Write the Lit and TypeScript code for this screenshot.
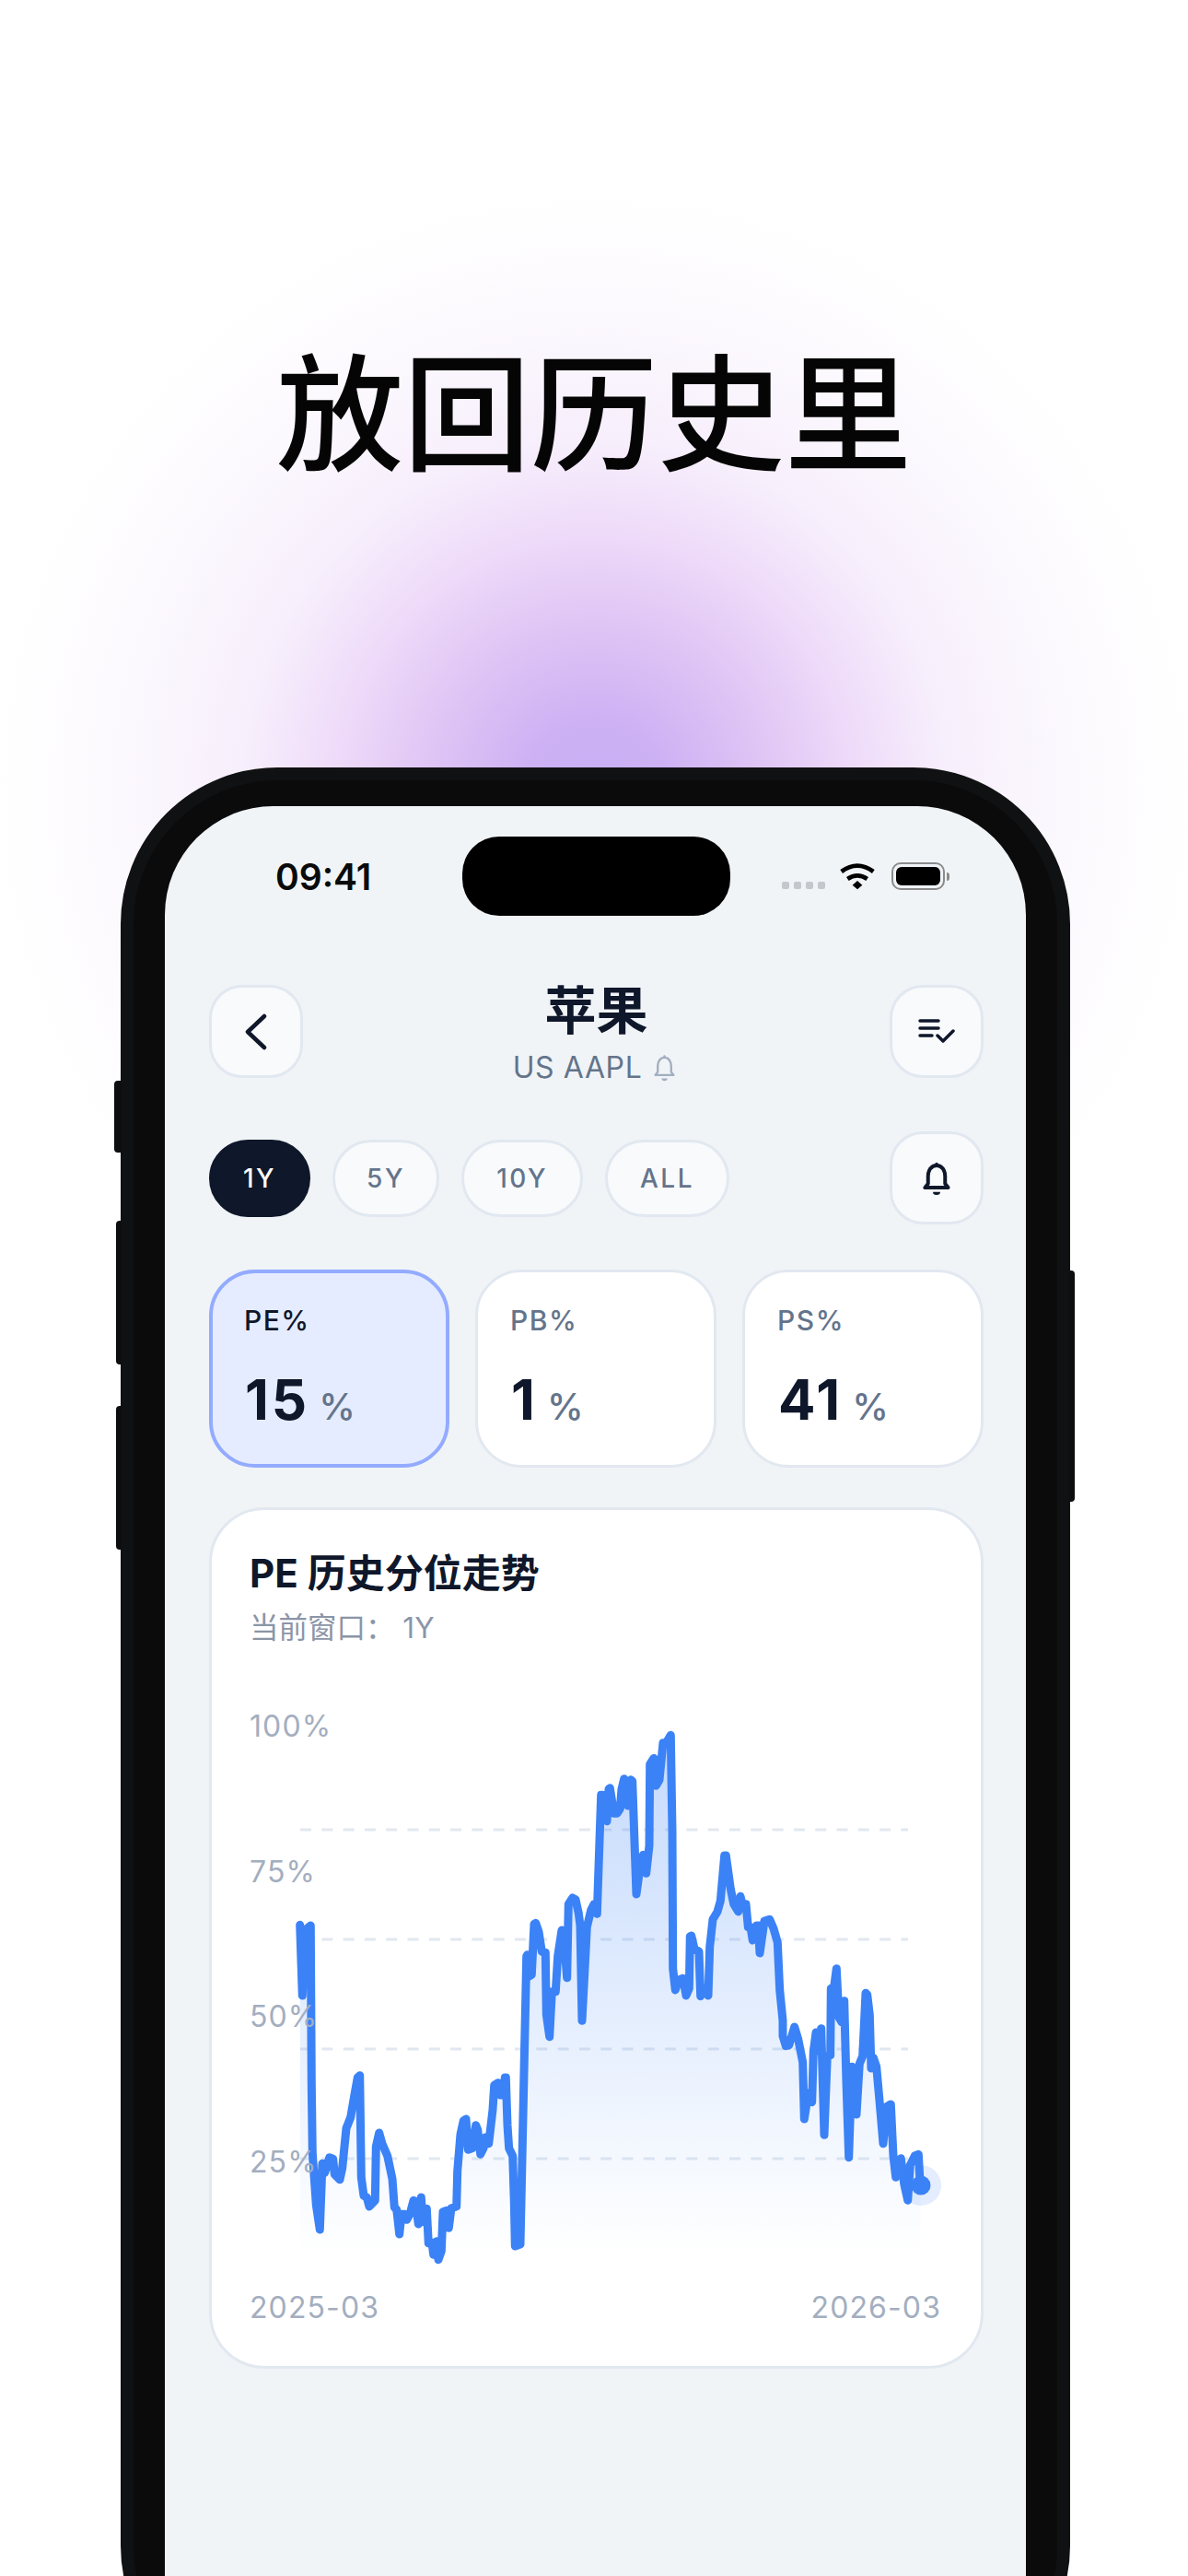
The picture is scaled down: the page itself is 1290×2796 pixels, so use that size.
import { LitElement, html, svg, css } from "lit";
import { customElement } from "lit/decorators.js";

type Seg = [number, number, number[]];
const segs: Seg[] = [
  [320, 2060, [17,88,25,318,33,130,40,100,52,90,55,600,58,830,70,1000,82,1080,90,865,98,895,113,845,125,850,130,900,147,917,155,880,168,750,182,715,195,640,205,585,212,578,217,910,225,970,235,975,243,1005,262,985,265,810,275,765,285,800,302,840,318,915,325,1008,332,1015,341,1095,348,1030,358,1030,365,1048,375,1030,387,985,393,988,403,1062,412,975,418,1055,430,1012,436,1125,447,1122,452,1162,462,1118,468,1178,478,1150,483,1022,495,1018,502,1075,510,1010,527,1005,530,890]],
  [490, 1870, [30,1340,40,1295,48,1290,55,1390,68,1385,80,1310,86,1325,95,1405,105,1385,110,1350,122,1370,135,1260,140,1180,152,1172,160,1212,168,1212,175,1155,178,1155,183,1310,188,1385,200,1410,205,1560,208,1704,225,1698,228,1560,245,760,248,755,255,825,262,820,270,655,275,652,285,680,295,745,307,748,310,950,320,1022,328,875,340,875,347,760,360,675,365,680,377,830,382,590,395,570,405,575,415,620,420,660,426,970,435,800,442,665,455,610,465,590,475,622,480,470,488,235,493,235,507,320,513,215,517,212,530,295,540,295,550,280,555,215,563,182,575,270,585,185,590,190]],
  [680, 1870, [33,558,45,470,55,430,65,490,75,400,77,135,90,115,97,205,108,185,120,65,130,65,145,40,150,350,152,800,160,870,170,838,185,832,195,888,205,865,208,695,212,693,222,735,237,745,242,890,252,865,267,888,272,730,282,640,297,615,307,580,320,432,325,432,340,540,350,590,365,615,372,565,378,590,390,590,397,665,405,665,412,708,425,660,430,660,435,750,450,645,467,640,480,670,493,715,500,870,510,970]],
  [840, 2100, [30,330,40,362,50,360,68,300,80,340,95,415,100,600,113,515,125,545,130,380,138,318,147,378,155,305,165,652,175,395,185,392,187,175,197,170,205,110,213,270,222,285,230,215,237,480,245,725,255,430,270,585,280,420,290,395,300,190,305,195,313,260,318,435,325,400,335,430,345,540,357,680,368,560,382,552,390,720,398,790,415,728,425,810,437,865,445,750,460,720,472,715,478,815]],
];

const pts: string[] = [];
for (const [ox, oy, p] of segs) {
  for (let i = 0; i < p.length; i += 2) {
    pts.push(`${(ox + p[i] / 3).toFixed(1)} ${(oy + p[i + 1] / 3).toFixed(1)}`);
  }
}
const linePath = "M" + pts.join("L");
const areaPath = linePath + "L1000 2445L326 2445Z";

const bell = (sw: number) => html`<svg class="bell-svg" viewBox="120 590 96 115" fill="none" stroke="currentColor" stroke-width=${sw} stroke-linejoin="round"><path d="M168 605C150 605 140 622 140 640V665L130 678H206L196 665V640C196 622 186 605 168 605Z"/><circle cx="168" cy="600" r="5" fill="currentColor" stroke="none"/><path d="M156 692H180A12 10 0 0 1 156 692Z" fill="currentColor" stroke="none"/></svg>`;

@customElement("app-root")
export class AppRoot extends LitElement {
  static styles = css`
    :host {
      display: block;
      width: 1290px;
      height: 2796px;
      overflow: hidden;
      font-family: Inter, "Noto Sans CJK SC", sans-serif;
      background: radial-gradient(circle 650px at 646px 860px, #c7aef5 0%, #cdb1f4 12%, #e0c6f5 29%, #eedaf9 43%, #f7effc 59%, #fcf9fe 80%, #ffffff 100%);
    }
    .headline {
      margin: 0;
      padding-top: 360px;
      height: 160px;
      line-height: 160px;
      text-align: center;
      font-family: "Noto Sans CJK SC", sans-serif;
      font-size: 138px;
      font-weight: 500;
      color: #050505;
    }
    .phone {
      position: relative;
      box-sizing: border-box;
      width: 1031px;
      height: 2100px;
      margin: 313px 0 0 131px;
      padding: 28px 34px 0;
      border: 14px solid #101112;
      border-radius: 170px;
      background: #0b0b0b;
    }
    .side { position: absolute; width: 8px; background: #0d0e0f; }
    .mute { left: -21px; top: 326px; height: 78px; border-radius: 4px 0 0 4px; }
    .vol-up { left: -19px; top: 478px; height: 156px; width: 6px; border-radius: 4px 0 0 4px; }
    .vol-down { left: -19px; top: 679px; height: 156px; width: 6px; border-radius: 4px 0 0 4px; }
    .power { right: -19px; top: 532px; height: 251px; width: 6px; border-radius: 0 4px 4px 0; }
    .screen {
      box-sizing: border-box;
      height: 2000px;
      padding: 33px 46px 0 48px;
      border-radius: 118px 118px 0 0;
      background: #f0f4f7;
    }
    .status {
      display: grid;
      grid-template-columns: 1fr 291px 1fr;
      align-items: center;
      height: 86px;
    }
    .time {
      padding-left: 72px;
      font-family: Inter, sans-serif;
      font-size: 39px;
      font-weight: 600;
      color: #0a0a0a;
    }
    .island { height: 86px; border-radius: 40px; background: #000; }
    .sys {
      display: flex;
      justify-content: flex-end;
      align-items: flex-end;
      padding-right: 37px;
    }
    .dots { display: flex; gap: 5px; margin-right: 15px; padding-bottom: 1px; }
    .dots i { display: block; width: 8px; height: 8px; border-radius: 2px; background: #c4c7cc; }
    .wifi { width: 40px; height: 30px; margin-right: 17px; }
    .batt { display: flex; align-items: center; gap: 2px; }
    .batt-body {
      box-sizing: border-box;
      width: 58px;
      height: 30px;
      padding: 3px;
      border: 2.5px solid #8b8b8b;
      border-radius: 10px;
    }
    .batt-fill { height: 100%; border-radius: 6px; background: #000; }
    .batt-nub { width: 3px; height: 9px; border-radius: 0 3px 3px 0; background: #8b8b8b; }
    .head {
      display: flex;
      justify-content: space-between;
      align-items: center;
      margin-top: 75px;
      height: 101px;
    }
    .icon-btn {
      box-sizing: border-box;
      display: flex;
      align-items: center;
      justify-content: center;
      width: 102px;
      height: 101px;
      border: 3px solid #e2e8f0;
      border-radius: 36px;
      background: #f8fafc;
      color: #0f172a;
    }
    .title-box {
      display: flex;
      flex-direction: column;
      align-items: center;
    }
    .title {
      font-family: "Noto Sans CJK SC", sans-serif;
      font-size: 56px;
      font-weight: 700;
      line-height: 62px;
      color: #0f172a;
    }
    .sub {
      display: flex;
      align-items: center;
      gap: 12px;
      margin: 17px 4px 0 0;
      font-size: 32px;
      line-height: 36px;
      letter-spacing: 0.6px;
      color: #64748b;
    }
    .sub .bell-svg { width: 25px; height: 30px; color: #a3afc0; }
    .bell-svg { width: 32px; height: 38px; }
    .range {
      display: flex;
      align-items: center;
      margin-top: 58px;
    }
    .pills { display: flex; gap: 24px; flex: 1; }
    .pill {
      box-sizing: border-box;
      display: flex;
      align-items: center;
      justify-content: center;
      height: 84px;
      border: 3px solid #e2e8f0;
      border-radius: 42px;
      background: #f8fafc;
      font-size: 28px;
      font-weight: 500;
      letter-spacing: 2.5px;
      color: #64748b;
    }
    .pill.on { background: #0f172a; border-color: #0f172a; color: #fff; }
    .metrics {
      display: grid;
      grid-template-columns: 261px 262px 262px;
      justify-content: space-between;
      margin-top: 49px;
    }
    .metric {
      box-sizing: border-box;
      height: 215px;
      padding: 34px 0 0 35px;
      border: 3px solid #e2e8f0;
      border-radius: 50px;
      background: #fff;
    }
    .metric.on {
      padding: 33px 0 0 34px;
      border: 4px solid #93abff;
      background: #e6ecff;
    }
    .m-label {
      font-size: 30px;
      font-weight: 500;
      line-height: 36px;
      letter-spacing: 1.5px;
      color: #64748b;
    }
    .on .m-label { color: #0f172a; }
    .m-val {
      display: flex;
      align-items: baseline;
      gap: 10px;
      margin-top: 34px;
      padding-left: 1px;
      font-size: 60px;
      font-weight: 700;
      line-height: 68px;
      letter-spacing: 3px;
      color: #0f172a;
    }
    .m-val span { font-size: 40px; font-weight: 500; letter-spacing: 0; color: #64748b; }
    .chart-card {
      box-sizing: border-box;
      height: 935px;
      margin-top: 43px;
      padding-top: 42px;
      border: 3px solid #e2e8f0;
      border-radius: 60px;
      background: #fff;
    }
    .c-title {
      padding-left: 41px;
      font-size: 42px;
      font-weight: 700;
      line-height: 54px;
      color: #0f172a;
    }
    .c-sub {
      margin-top: 10px;
      padding-left: 41px;
      font-size: 31.5px;
      line-height: 44px;
      color: #8b95a7;
    }
    .chart { display: block; width: 834px; height: 740px; margin-top: 31px; }
    .axis { font-family: Inter, sans-serif; font-size: 32px; letter-spacing: 1.1px; fill: #a3aebf; }
    .grid { stroke: #e2e8f0; stroke-width: 3; stroke-dasharray: 12 11.3; }
  `;

  render() {
    return html`
      <h1 class="headline">放回历史里</h1>
      <div class="phone">
        <div class="side mute"></div>
        <div class="side vol-up"></div>
        <div class="side vol-down"></div>
        <div class="side power"></div>
        <div class="screen">
          <div class="status">
            <div class="time">09:41</div>
            <div class="island"></div>
            <div class="sys">
              <div class="dots"><i></i><i></i><i></i><i></i></div>
              <svg class="wifi" viewBox="0 0 120 90" fill="none" stroke="#000" stroke-width="14"><path d="M8 30Q60 -8 112 30"/><path d="M28 54Q60 32 92 54"/><path d="M60 60L76 74L60 88L44 74Z" fill="#000" stroke="none"/></svg>
              <div class="batt"><div class="batt-body"><div class="batt-fill"></div></div><div class="batt-nub"></div></div>
            </div>
          </div>
          <div class="head">
            <div class="icon-btn">
              <svg width="24" height="40" viewBox="0 0 24 40" fill="none" stroke="currentColor" stroke-width="4.5" stroke-linecap="round" stroke-linejoin="round"><path d="M21 3L3 20L21 37"/></svg>
            </div>
            <div class="title-box">
              <div class="title">苹果</div>
              <div class="sub">US AAPL ${bell(9)}</div>
            </div>
            <div class="icon-btn">
              <svg width="40" height="30" viewBox="0 0 40 30" fill="none" stroke="currentColor" stroke-width="3.5" stroke-linecap="round" stroke-linejoin="round"><path d="M2 3H22M2 11H22M2 19H15"/><path d="M21 19L27 25L38 14"/></svg>
            </div>
          </div>
          <div class="range">
            <div class="pills">
              <div class="pill on" style="width:110px">1Y</div>
              <div class="pill" style="width:116px">5Y</div>
              <div class="pill" style="width:132px">10Y</div>
              <div class="pill" style="width:135px">ALL</div>
            </div>
            <div class="icon-btn">${bell(12)}</div>
          </div>
          <div class="metrics">
            <div class="metric on"><div class="m-label">PE%</div><div class="m-val">15<span>%</span></div></div>
            <div class="metric"><div class="m-label">PB%</div><div class="m-val">1<span>%</span></div></div>
            <div class="metric"><div class="m-label">PS%</div><div class="m-val">41<span>%</span></div></div>
          </div>
          <div class="chart-card">
            <div class="c-title">PE 历史分位走势</div>
            <div class="c-sub">当前窗口： 1Y</div>
            <svg class="chart" viewBox="230 1820 834 740">
              <defs>
                <linearGradient id="fade" gradientUnits="userSpaceOnUse" x1="0" y1="1880" x2="0" y2="2445">
                  <stop offset="0" stop-color="#3b82f6" stop-opacity="0.3"/>
                  <stop offset="1" stop-color="#3b82f6" stop-opacity="0"/>
                </linearGradient>
              </defs>
              ${[1986, 2105, 2224, 2343].map((y) => svg`<line class="grid" x1="326" x2="986" y1=${y} y2=${y}/>`)}
              <path d=${areaPath} fill="url(#fade)"/>
              <path d=${linePath} fill="none" stroke="#3b82f6" stroke-width="9" stroke-linejoin="round" stroke-linecap="round"/>
              <circle cx="1000" cy="2372" r="22" fill="#3b82f6" fill-opacity="0.14"/>
              <circle cx="1000" cy="2372" r="10.5" fill="#3b82f6"/>
              <text class="axis" x="271" y="1885">100%</text>
              <text class="axis" x="271" y="2043">75%</text>
              <text class="axis" x="271" y="2200">50%</text>
              <text class="axis" x="271" y="2358">25%</text>
              <text class="axis" x="271" y="2516">2025-03</text>
              <text class="axis" x="1022" y="2516" text-anchor="end">2026-03</text>
            </svg>
          </div>
        </div>
      </div>
    `;
  }
}
